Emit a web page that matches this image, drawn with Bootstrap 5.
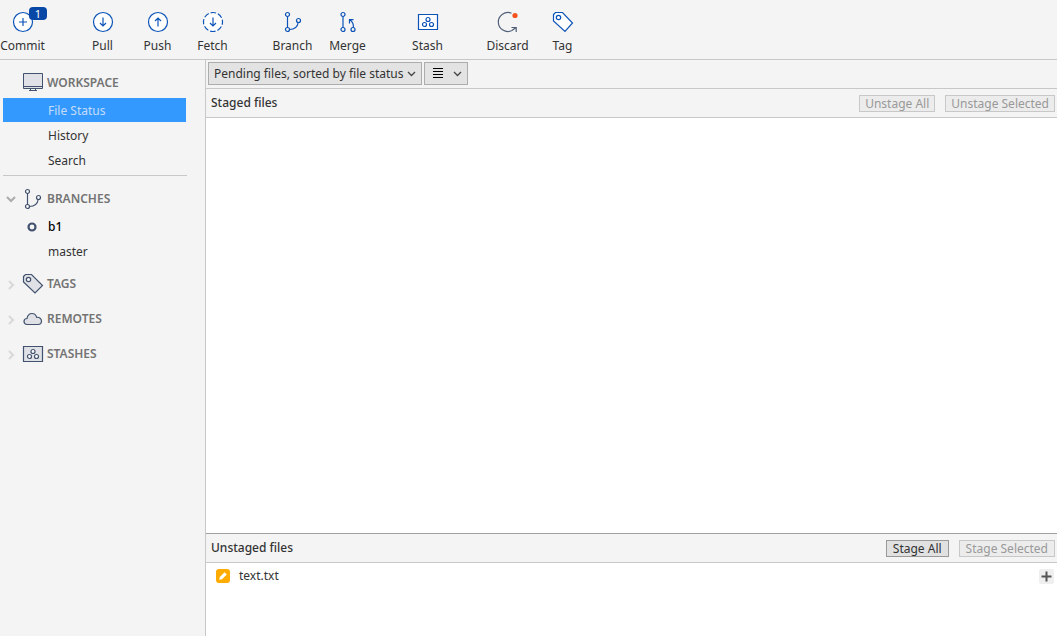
<!DOCTYPE html>
<html lang="en">
<head>
<meta charset="utf-8">
<meta name="viewport" content="width=device-width, initial-scale=1">
<title>File Status</title>
<link href="https://cdn.jsdelivr.net/npm/bootstrap@5.3.0/dist/css/bootstrap.min.css" rel="stylesheet">
<style>
  body { font-family: "Noto Sans", "Open Sans", sans-serif; font-size: 12px; line-height: 16px; color: #333; background: #f4f4f4; }
  svg { display: block; fill: none; }
  button { font: inherit; color: inherit; background: none; border: 0; padding: 0; }
  .toolbar { height: 60px; border-bottom: 1px solid #c8c8c8; }
  .tool { width: 55px; padding: 10px 0 0; white-space: nowrap; }
  .tool svg { color: #0b53b8; width: 24px; height: 24px; }
  .tool span { margin-top: 4px; }
  .tool-first { width: 45px; margin-right: 30px; }
  .tool-gap { margin-left: 25px; }
  .tool .count { left: 29px; top: 7px; width: 18px; height: 13px; margin: 0; border-radius: 4px; background: #0747a6; color: #fff; font-size: 11px; line-height: 13px; }
  .sidebar { flex: 0 0 206px; padding: 5px 19px 0 3px; border-right: 1px solid #c8c8c8; }
  .side-head { width: 100%; height: 33px; padding-top: 3px; font-size: 12px; font-weight: 600; line-height: 16px; color: #737373; }
  .side-head .twist { width: 16px; margin-right: 3px; color: #d8d8d8; }
  .side-head .open { color: #aaa; }
  .side-head .glyph { width: 22px; margin-right: 3px; color: #42526e; }
  .side-groups { gap: 2px; margin-top: 3px; }
  .side-item { height: 24px; padding: 2px 0 0 45px; margin-bottom: 1px; color: #333; text-decoration: none; }
  .side-item.active { background: #3399ff; color: #c4dcf8; }
  .side-item.current { color: #000; font-weight: 500; padding-left: 23px; }
  .side-item.current svg { width: 12px; margin-right: 10px; color: #42526e; }
  .rule { height: 1px; margin: 3px -1px 5px 0; background: #c8c8c8; }
  .bar { height: 29px; border-bottom: 1px solid #c8c8c8; }
  .filters { gap: 2px; padding-left: 2px; }
  .picker { height: 23px; margin-top: -1px; border: 1px solid #adadad; border-radius: 0; background-color: #e3e3e3; color: #333; }
  .sorter { width: 214px; padding: 0 16px 0 5px; font-size: 12px; line-height: 16px; background-size: 9px 9px; background-position: right 5px center;
    background-image: url("data:image/svg+xml,%3Csvg xmlns='http://www.w3.org/2000/svg' viewBox='0 0 9 9'%3E%3Cpath d='M1 3l3.500 3.500L8 3' fill='none' stroke='%23444' stroke-width='1.300'/%3E%3C/svg%3E"); }
  .viewer { width: 44px; padding: 0 5px 0 8px; }
  .pane-head { gap: 10px; padding: 0 2px 0 5px; }
  .pane-head h2 { font-size: 12px; font-weight: 500; line-height: 16px; }
  .act { height: 17px; padding: 0 5px; border: 1px solid #999; background: #e1e1e1; font-size: 12px; line-height: 15px; white-space: nowrap; }
  .act:disabled { border-color: #c8c8c8; background: #ececec; color: #999; }
  .unstaged { border-top: 1px solid #a0a0a0; }
  .unstaged .act { padding: 0 6px; }
  .files { min-height: 73px; }
  .file-row { height: 26px; padding: 0 3px 0 10px; }
  .file-name { margin-left: 9px; }
  .add { width: 15px; height: 15px; border-radius: 2px; background: #efefef; color: #555; }
</style>
</head>
<body class="d-flex flex-column min-vh-100">
<header class="toolbar d-flex">
  <button class="tool tool-first position-relative d-flex flex-column align-items-center" type="button">
    <svg viewBox="0 0 24 24" stroke="currentColor" stroke-width="1.200"><circle cx="12" cy="12" r="9.500" fill="#fff"/><path d="M12 8v8M8 12h8"/></svg>
    <span class="count position-absolute">1</span><span>Commit</span></button>
  <button class="tool d-flex flex-column align-items-center" type="button">
    <svg viewBox="0 0 24 24" stroke="currentColor" stroke-width="1.200"><circle cx="12" cy="12" r="9.500" fill="#fff"/><path d="M12 7.500v8.500M9 13l3 3 3-3"/></svg><span>Pull</span></button>
  <button class="tool d-flex flex-column align-items-center" type="button">
    <svg viewBox="0 0 24 24" stroke="currentColor" stroke-width="1.200"><circle cx="12" cy="12" r="9.500" fill="#fff"/><path d="M12 16.500V8M9 11l3-3 3 3"/></svg><span>Push</span></button>
  <button class="tool d-flex flex-column align-items-center" type="button">
    <svg viewBox="0 0 24 24" stroke="currentColor" stroke-width="1.200"><circle cx="12" cy="12" r="9.500" fill="#fff" stroke-dasharray="5.500 1.960" stroke-dashoffset="2.700"/><path d="M12 7.500v8.500M9 13l3 3 3-3"/></svg><span>Fetch</span></button>
  <button class="tool tool-gap d-flex flex-column align-items-center" type="button">
    <svg viewBox="0 0 24 24" stroke="currentColor" stroke-width="1.200"><circle cx="6.500" cy="4.500" r="2"/><circle cx="6.500" cy="19.500" r="2"/><circle cx="17.500" cy="10.500" r="2"/><path d="M6.500 6.500v11M8.500 19.500c4.500 0 8-2.500 8.700-7"/></svg><span>Branch</span></button>
  <button class="tool d-flex flex-column align-items-center" type="button">
    <svg viewBox="0 0 24 24" stroke="currentColor" stroke-width="1.200"><circle cx="7" cy="4.500" r="2"/><circle cx="7" cy="19.500" r="2"/><circle cx="17" cy="19.500" r="2"/><path d="M7 6.500v11M17.300 17.500c.4-3-.8-6-3.800-7.700M13.500 13.500V9.700h4"/></svg><span>Merge</span></button>
  <button class="tool tool-gap d-flex flex-column align-items-center" type="button">
    <svg viewBox="0 0 24 24" stroke="currentColor" stroke-width="1.200"><path d="M2.500 4.500h19v15h-19z" fill="#fff"/><circle cx="12" cy="9.500" r="2"/><circle cx="8.500" cy="14.500" r="2"/><circle cx="15.500" cy="14.500" r="2"/></svg><span>Stash</span></button>
  <button class="tool tool-gap d-flex flex-column align-items-center" type="button">
    <svg viewBox="0 0 24 24" stroke="#505f79" stroke-width="1.200"><path d="M15.500 3.200A9.500 9.500 0 1 0 16 20.500l4-3M15.500 17.500h4.700v4.500"/><circle cx="19" cy="5.500" r="2.600" fill="#f4511e" stroke="none"/></svg><span>Discard</span></button>
  <button class="tool d-flex flex-column align-items-center" type="button">
    <svg viewBox="0 0 24 24" stroke="currentColor" stroke-width="1.200"><path d="M2.500 4.500l2-2h7l10 10.500-7.500 8.500L2.500 11z" fill="#fff"/><circle cx="7.500" cy="7.500" r="2.200"/></svg><span>Tag</span></button>
</header>
<div class="d-flex flex-grow-1">
  <nav class="sidebar" aria-label="Repository">
    <button class="side-head d-flex align-items-center" type="button"><span class="twist"></span>
      <svg class="glyph" viewBox="0 0 22 22" stroke="currentColor"><path d="M1.500 1.500h19v15h-19z" fill="#dfe1e6"/><path d="M2 14.500h18M8.500 17v2M13.500 17v2M7 18.500h8"/></svg>WORKSPACE</button>
    <a class="side-item active d-flex align-items-center" href="#">File Status</a>
    <a class="side-item d-flex align-items-center" href="#">History</a>
    <a class="side-item d-flex align-items-center" href="#">Search</a>
    <div class="rule"></div>
    <button class="side-head d-flex align-items-center" type="button" aria-expanded="true">
      <svg class="twist open" viewBox="0 0 16 16" stroke="currentColor" stroke-width="2"><path d="M4 6l4 4 4-4"/></svg>
      <svg class="glyph" viewBox="0 0 22 22" stroke="currentColor" stroke-width="1.200"><circle cx="5.500" cy="3.500" r="2"/><circle cx="5.500" cy="18.500" r="2"/><circle cx="16.500" cy="9.500" r="2"/><path d="M5.500 5.500v11M7.500 18.500c4.500 0 8-2.500 8.700-7"/></svg>BRANCHES</button>
    <a class="side-item current d-flex align-items-center" href="#"><svg viewBox="0 0 12 12" stroke="currentColor" stroke-width="2.200"><circle cx="6" cy="6" r="3.500"/></svg>b1</a>
    <a class="side-item d-flex align-items-center" href="#">master</a>
    <div class="side-groups d-flex flex-column">
      <button class="side-head d-flex align-items-center" type="button" aria-expanded="false">
        <svg class="twist" viewBox="0 0 16 16" stroke="currentColor" stroke-width="2"><path d="M6 5l4 4-4 4"/></svg>
        <svg class="glyph" viewBox="0 0 22 22" stroke="currentColor" stroke-width="1.200"><path d="M1.500 3.500l2-2h6l11 11-7.500 7.500L1.500 9z" fill="#dfe1e6"/><circle cx="6.500" cy="6.500" r="2.200" fill="#f4f4f4"/></svg>TAGS</button>
      <button class="side-head d-flex align-items-center" type="button" aria-expanded="false">
        <svg class="twist" viewBox="0 0 16 16" stroke="currentColor" stroke-width="2"><path d="M6 5l4 4-4 4"/></svg>
        <svg class="glyph" viewBox="0 0 22 22" stroke="currentColor" stroke-width="1.200"><path d="M5 16.500a3 3 0 0 1 0-6c.5-3 2.500-5 5-5s4 1.500 4.700 3.800c2.800-.3 4.800 1.500 4.800 3.700s-1.500 3.500-3.500 3.500z" fill="#dfe1e6"/></svg>REMOTES</button>
      <button class="side-head d-flex align-items-center" type="button" aria-expanded="false">
        <svg class="twist" viewBox="0 0 16 16" stroke="currentColor" stroke-width="2"><path d="M6 5l4 4-4 4"/></svg>
        <svg class="glyph" viewBox="0 0 22 22" stroke="currentColor" stroke-width="1.200"><path d="M1.500 3.500h19v15h-19z" fill="#dfe1e6"/><g fill="#fff"><circle cx="11" cy="8.500" r="2"/><circle cx="7.500" cy="13.500" r="2"/><circle cx="14.500" cy="13.500" r="2"/></g></svg>STASHES</button>
    </div>
  </nav>
  <main class="d-flex flex-column flex-grow-1">
    <div class="bar filters d-flex align-items-center">
      <select class="picker sorter form-select" aria-label="Sort files"><option>Pending files, sorted by file status</option></select>
      <button class="picker viewer d-flex align-items-center justify-content-between" type="button" aria-label="View mode">
        <svg width="10" height="11" viewBox="0 0 10 11" stroke="#000"><path d="M0 .5h10M0 3.500h10M0 6.500h10M0 9.500h10"/></svg>
        <svg width="9" height="9" viewBox="0 0 9 9" stroke="#444" stroke-width="1.300"><path d="M1 3l3.500 3.500L8 3"/></svg>
      </button>
    </div>
    <section class="d-flex flex-column flex-grow-1">
      <div class="bar pane-head d-flex align-items-center">
        <h2 class="mb-0 me-auto">Staged files</h2>
        <button class="act" type="button" disabled>Unstage All</button>
        <button class="act" type="button" disabled>Unstage Selected</button>
      </div>
      <div class="bg-white flex-grow-1"></div>
    </section>
    <section class="unstaged">
      <div class="bar pane-head d-flex align-items-center">
        <h2 class="mb-0 me-auto">Unstaged files</h2>
        <button class="act" type="button">Stage All</button>
        <button class="act" type="button" disabled>Stage Selected</button>
      </div>
      <ul class="files list-unstyled bg-white mb-0">
        <li class="file-row d-flex align-items-center">
          <svg width="14" height="14" viewBox="0 0 14 14"><rect width="14" height="14" rx="3" fill="#ffab00"/><path d="M3.200 10.800l.6-2.800 4.800-4.800 2.200 2.200-4.800 4.800z" fill="#fff"/></svg>
          <span class="file-name me-auto">text.txt</span>
          <button class="add d-flex align-items-center justify-content-center" type="button" aria-label="Stage text.txt"><svg width="11" height="11" viewBox="0 0 11 11" stroke="currentColor" stroke-width="2"><path d="M5.500 .5v10M.5 5.500h10"/></svg></button>
        </li>
      </ul>
    </section>
  </main>
</div>
<script src="https://cdn.jsdelivr.net/npm/bootstrap@5.3.0/dist/js/bootstrap.bundle.min.js"></script>
</body>
</html>
